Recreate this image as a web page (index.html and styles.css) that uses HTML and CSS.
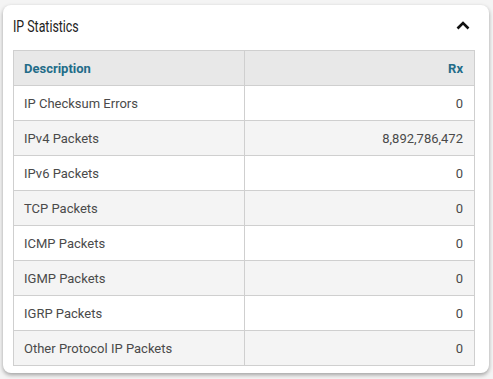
FILE: index.html
```html
<!DOCTYPE html>
<html>
<head>
<meta charset="utf-8">
<link rel="stylesheet" href="styles.css">
</head>
<body>
<div class="card">
  <div class="card-head">
    <h2 class="title">IP Statistics</h2>
    <svg class="chev" width="14" height="9" viewBox="0 0 14 9"><path d="M1.5 7.5 L7 2 L12.5 7.5" fill="none" stroke="#111" stroke-width="2.6"/></svg>
  </div>
  <table class="stats">
    <thead>
      <tr><th class="desc">Description</th><th class="num">Rx</th></tr>
    </thead>
    <tbody>
      <tr><td>IP Checksum Errors</td><td class="num">0</td></tr>
      <tr><td>IPv4 Packets</td><td class="num">8,892,786,472</td></tr>
      <tr><td>IPv6 Packets</td><td class="num">0</td></tr>
      <tr><td>TCP Packets</td><td class="num">0</td></tr>
      <tr><td>ICMP Packets</td><td class="num">0</td></tr>
      <tr><td>IGMP Packets</td><td class="num">0</td></tr>
      <tr><td>IGRP Packets</td><td class="num">0</td></tr>
      <tr><td>Other Protocol IP Packets</td><td class="num">0</td></tr>
    </tbody>
  </table>
</div>
</body>
</html>
```
FILE: styles.css
```css
html, body {
  margin: 0;
  padding: 0;
  background: #f4f4f4;
}
body {
  padding: 5px 4px 6px 3px;
  font-family: Roboto, "Liberation Sans", sans-serif;
}
.card {
  width: 486px;
  height: 368px;
  box-sizing: border-box;
  background: #fff;
  border-radius: 8px;
  box-shadow: 0 2px 4px rgba(0,0,0,0.35);
  padding: 0 14px 0 10px;
}
.card-head {
  height: 45px;
  display: flex;
  align-items: center;
  justify-content: space-between;
}
.title {
  margin: 0;
  font-family: Roboto, sans-serif;
  font-weight: normal;
  font-size: 16.5px;
  color: #222;
  transform: scaleX(0.75);
  transform-origin: left center;
  position: relative;
  top: -1px;
}
.chev {
  margin-right: 5px;
  position: relative;
  top: -2px;
}
.stats {
  width: 462px;
  border-collapse: collapse;
  table-layout: fixed;
  font-size: 13px;
  color: #4a4a4a;
}
.stats th, .stats td {
  border: 1px solid #cfcfcf;
  height: 34px;
  padding: 0 10px;
  text-align: left;
}
.stats th {
  background: #e8e8e8;
  color: #236c88;
  font-weight: bold;
}
.stats .num {
  text-align: right;
  padding-right: 11px;
}
.stats tbody tr:nth-child(even) td {
  background: #f4f4f4;
}
```
